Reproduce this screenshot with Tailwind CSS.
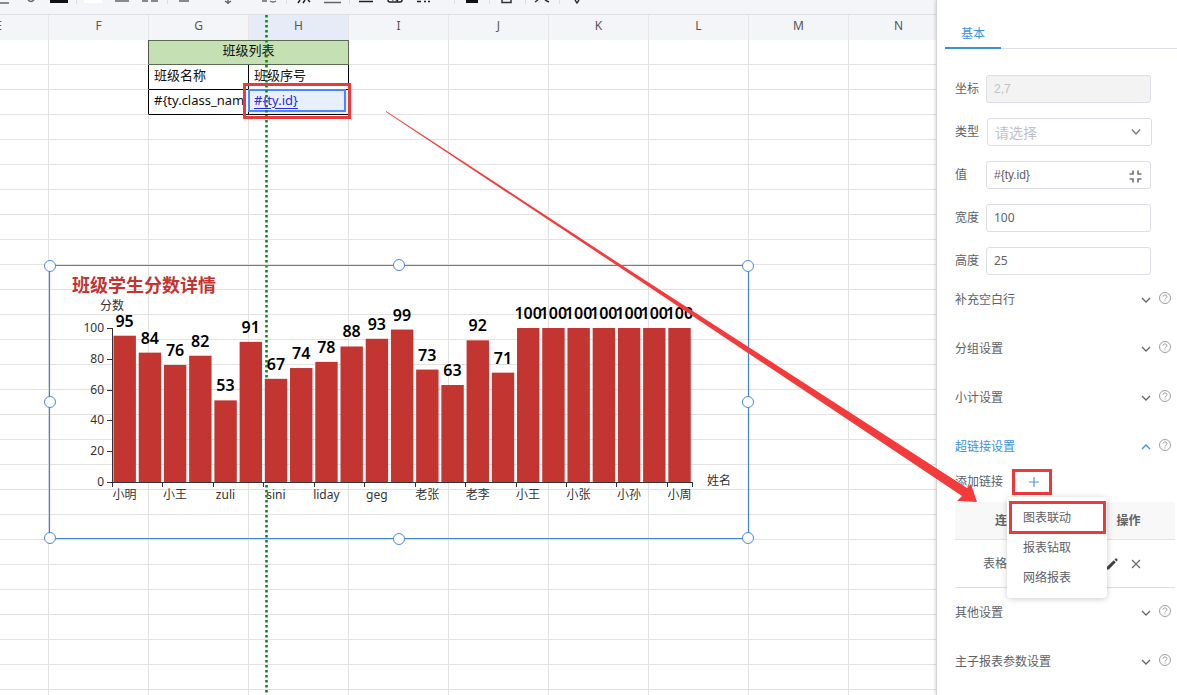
<!DOCTYPE html>
<html lang="zh-CN">
<head>
<meta charset="utf-8">
<title>报表设计器</title>
<script src="https://cdn.jsdelivr.net/npm/@tailwindcss/browser@4"></script>
</head>
<body class="flex h-screen overflow-hidden bg-white font-['Noto_Sans','Noto_Sans_CJK_SC',sans-serif] text-[12px] text-[#606266]">
<main class="relative min-w-0 flex-1 overflow-hidden">
  <div class="h-[15px] border-b border-[#dfe0e2] bg-[#f4f5f8]">
    <svg class="block h-[14px] w-[600px]" viewBox="0 0 600 14" fill="none" stroke="#666" stroke-width="1.5" role="img" aria-label="工具栏">
      <path d="M0 3H9M28 0q3 3 6 0M115 1h14M142 1h6m3 0h7M179 1h10M228 0v4M225 1l3 2 3-2M262 1h5m3 0q3 2 6 0M324 2.500h17"/>
      <path d="M50 1.500h18" stroke="#111" stroke-width="3"/>
      <path d="M84 1.500h18" stroke="#fff" stroke-width="3"/>
      <path d="M298 3l2-3m3 3l2-3m3 0l2 2M359 1.500h14M388 0q0 2 2 2h10q2 0 2-2M392 0l3-1 3 2M417 1.500h4m3 0h2m2 0h2" stroke="#222"/>
      <path d="M466 1.500h12" stroke="#111" stroke-width="3"/>
      <path d="M502 0v2.500h9V0M535 2l3-2m7 0l4 2M575 0l2 3 2-3" stroke="#333"/>
      <path d="M76.500 0v4M167.500 0v4M286.500 0v4M349.500 0v4M454.500 0v4M489.500 0v4M525.500 0v4M559.500 0v4" stroke="#dedee0" stroke-width="1"/>
    </svg>
  </div>
  <table class="-ml-[51px] w-[1000px] table-fixed border-separate border-spacing-0 leading-[19px] text-[#111]">
    <thead>
      <tr class="h-[25px] bg-[#f4f5f8] text-[12px] text-[#585757] *:border-r *:border-[#e6e6e6] *:p-0 *:pb-1 *:font-normal">
        <th>E</th><th>F</th><th>G</th><th class="bg-[#e6ebf8]">H</th><th>I</th><th>J</th><th>K</th><th>L</th><th>M</th><th>N</th>
      </tr>
    </thead>
    <tbody id="rows">
      <tr class="h-[25px] *:border-r *:border-b *:border-[#e2e2e2] *:p-0 *:pb-1">
        <td></td><td class="border-r-[#555]!"></td><td colspan="2" class="border-t border-[#5b6b52]! bg-[#c5e0b3] text-center text-[13px]">班级列表</td><td></td><td></td><td></td><td></td><td></td><td></td>
      </tr>
      <tr class="h-[25px] *:border-r *:border-b *:border-[#e2e2e2] *:p-0 *:pb-1">
        <td></td><td class="border-r-black!"></td><td class="border-black! pl-[5px]! text-[13px]">班级名称</td><td class="border-black! pl-[5px]! text-[13px]">班级序号</td><td></td><td></td><td></td><td></td><td></td><td></td>
      </tr>
      <tr class="h-[25px] *:border-r *:border-b *:border-[#e2e2e2] *:p-0 *:pb-1">
        <td></td><td class="border-r-black!"></td><td class="overflow-hidden border-black! pl-[5px]! text-[13px] whitespace-nowrap">#{ty.class_nam</td><td class="border-black! bg-[#e9effd] pl-[5px]! text-[13px] text-[#2b2be0] underline underline-offset-3">#{ty.id}</td><td></td><td></td><td></td><td></td><td></td><td></td>
      </tr>
    </tbody>
  </table>

  <div class="absolute top-[89px] left-[248px] h-[23px] w-[98px] border-2 border-[#4b89ff]"></div>
  <svg class="absolute top-[15px] left-[265px] h-[680px] w-[3px]" viewBox="0 0 3 680"><path d="M1.500 0V680" stroke="#0c8a1c" stroke-width="2.600" stroke-dasharray="2.500 2.500"/></svg>
  <div class="absolute top-[83px] left-[243px] h-[36px] w-[108px] border-3 border-[#ea3a3c]"></div>

  <svg id="chart" class="absolute top-[255px] left-[40px] h-[295px] w-[720px]" viewBox="40 255 720 295" fill="#333" font-size="12">
    <text x="72" y="292" font-size="18" font-weight="700" fill="#c23531">班级学生分数详情</text>
    <text x="112" y="310" text-anchor="middle">分数</text>
    <text x="719" y="485" text-anchor="middle">姓名</text>
    <g id="bars"></g>
    <path d="M112.500 328V482M112 482.500H692" stroke="#333" fill="none"/>
    <g fill="none" stroke="#3f83dc"><path d="M49.500 265.500H748.500V538.500H49.500Z" stroke-width="1.200"/>
      <g fill="#fff" stroke="#4b89dc"><circle cx="50" cy="266" r="5.500"/><circle cx="399" cy="265" r="5.500"/><circle cx="748" cy="266" r="5.500"/><circle cx="50" cy="402" r="5.500"/><circle cx="748" cy="402" r="5.500"/><circle cx="50" cy="538" r="5.500"/><circle cx="399" cy="539" r="5.500"/><circle cx="748" cy="538" r="5.500"/></g></g>
  </svg>
</main>

<aside class="relative z-10 w-[241px] shrink-0 border-l border-[#d4d5d8] bg-white shadow-[-1px_0_3px_#0002]">
  <div class="ml-2 flex h-[49px] items-end border-b border-[#dcdfe6]">
    <button class="-mb-px h-[28px] w-[56px] border-b-2 border-[#3d8ed8] text-[#3d92e6]">基本</button>
  </div>
  <form class="flex flex-col gap-[15px] pt-[26px] pl-[18px]">
    <div class="flex h-7 items-center"><label for="pos" class="w-[31px]">坐标</label><input id="pos" disabled value="2,7" class="h-7 w-[165px] rounded-[3px] border border-[#dcdfe6] bg-[#f3f3f4] px-[7px] font-['Liberation_Sans',sans-serif] text-[#bfc2c8]"></div>
    <div class="flex h-7 items-center"><label for="type" class="w-[31px]">类型</label>
      <div class="relative ml-px"><select id="type" class="h-7 w-[165px] appearance-none rounded-[3px] border border-[#dcdfe6] bg-white px-[7px] text-[14px] text-[#bfc2c8]"><option>请选择</option></select>
      <svg class="pointer-events-none absolute top-[9px] right-[11px] size-2.5" viewBox="0 0 10 10" fill="none" stroke="#777" stroke-width="1.300"><path d="M1 2.500L5 7 9 2.500"/></svg></div></div>
    <div class="flex h-7 items-center"><label for="val" class="w-[31px]">值</label>
      <div class="relative"><input id="val" value="#{ty.id}" class="h-7 w-[165px] rounded-[3px] border border-[#dcdfe6] px-[7px] font-['Liberation_Sans',sans-serif]">
      <svg class="absolute top-[9px] right-[9px] size-[13px]" viewBox="0 0 13 13" fill="none" stroke="#777" stroke-width="1.700"><path d="M.5 4H4V.500M9 .500V4H12.500M.5 9H4V12.500M9 12.500V9H12.500"/></svg></div></div>
    <div class="flex h-7 items-center"><label for="w" class="w-[31px]">宽度</label><input id="w" value="100" class="h-7 w-[165px] rounded-[3px] border border-[#dcdfe6] px-[7px] pb-[2px]"></div>
    <div class="flex h-7 items-center"><label for="h" class="w-[31px]">高度</label><input id="h" value="25" class="h-7 w-[165px] rounded-[3px] border border-[#dcdfe6] px-[7px] pb-[2px]"></div>
  </form>
  <section class="pl-[18px]">
    <div class="flex h-[49px] items-center pr-[6px]"><button class="flex flex-1 items-center justify-between">补充空白行<svg class="size-2.5" viewBox="0 0 10 10" fill="none" stroke="#666" stroke-width="1.300"><path d="M1 3L5 7 9 3"/></svg></button><svg class="mb-1 ml-2 size-3" viewBox="0 0 12 12" fill="none" stroke="#909399" stroke-width=".9"><circle cx="6" cy="6" r="5.500"/><path d="M4.100 4.700a1.900 1.800 0 1 1 2.700 1.600Q6 6.700 6 7.500M6 8.500V9.400"/></svg></div>
    <div class="flex h-[49px] items-center pr-[6px]"><button class="flex flex-1 items-center justify-between">分组设置<svg class="size-2.5" viewBox="0 0 10 10" fill="none" stroke="#666" stroke-width="1.300"><path d="M1 3L5 7 9 3"/></svg></button><svg class="mb-1 ml-2 size-3" viewBox="0 0 12 12" fill="none" stroke="#909399" stroke-width=".9"><circle cx="6" cy="6" r="5.500"/><path d="M4.100 4.700a1.900 1.800 0 1 1 2.700 1.600Q6 6.700 6 7.500M6 8.500V9.400"/></svg></div>
    <div class="flex h-[49px] items-center pr-[6px]"><button class="flex flex-1 items-center justify-between">小计设置<svg class="size-2.5" viewBox="0 0 10 10" fill="none" stroke="#666" stroke-width="1.300"><path d="M1 3L5 7 9 3"/></svg></button><svg class="mb-1 ml-2 size-3" viewBox="0 0 12 12" fill="none" stroke="#909399" stroke-width=".9"><circle cx="6" cy="6" r="5.500"/><path d="M4.100 4.700a1.900 1.800 0 1 1 2.700 1.600Q6 6.700 6 7.500M6 8.500V9.400"/></svg></div>
    <div class="flex h-[49px] items-center pr-[6px]"><button class="flex flex-1 items-center justify-between text-[#3d92e6]">超链接设置<svg class="size-2.5" viewBox="0 0 10 10" fill="none" stroke="currentColor" stroke-width="1.300"><path d="M1 7L5 3 9 7"/></svg></button><svg class="mb-1 ml-2 size-3" viewBox="0 0 12 12" fill="none" stroke="#909399" stroke-width=".9"><circle cx="6" cy="6" r="5.500"/><path d="M4.100 4.700a1.900 1.800 0 1 1 2.700 1.600Q6 6.700 6 7.500M6 8.500V9.400"/></svg></div>
  </section>
  <div class="relative pl-[18px]">
    <div class="-mt-[2px] flex h-[26px] items-center gap-[9px]">添加链接<button aria-label="添加" class="flex h-[26px] w-10 items-center justify-center border-3 border-[#ea3a3c]"><svg class="ml-1 size-2.5" viewBox="0 0 10 10" stroke="#4a98e0" stroke-width="1.200"><path d="M5 0V10M0 5H10"/></svg></button></div>
    <table class="mt-[7px] w-[220px] table-fixed border-separate border-spacing-0">
      <thead><tr class="h-[38px] bg-[#f8f8f9] *:border-b *:border-[#e3e4e8] *:p-0"><th class="w-[127px] pl-[40px]! text-left">连接</th><th class="text-center">操作</th></tr></thead>
      <tbody><tr class="h-[48px] *:border-b *:border-[#dcdfe6] *:p-0"><td class="pl-[28px]!">表格联动</td><td><div class="flex items-center gap-[12px] pl-[24px]">
        <button aria-label="编辑"><svg class="block size-3" viewBox="0 0 12 12" fill="#444"><path d="M0 12L.8 9 7.700 2.200 9.800 4.300 3 11.200ZM8.500 1.400L9.500.4Q10 0 10.600.500L11.500 1.400Q12 2 11.500 2.500L10.500 3.500Z"/></svg></button>
        <button aria-label="删除"><svg class="block size-3" viewBox="0 0 12 12" stroke="#666" stroke-width="1.100"><path d="M2 2L10 10M10 2L2 10"/></svg></button></div></td></tr></tbody>
    </table>
    <div role="menu" class="absolute top-[28px] left-[70px] flex h-[101px] w-[100px] flex-col rounded bg-white pt-[6px] shadow-[0_1px_6px_#0003] *:h-[30px] *:pl-4 *:text-left">
      <button role="menuitem">图表联动</button><button role="menuitem">报表钻取</button><button role="menuitem">网络报表</button>
    </div>
    <div class="pointer-events-none absolute top-[32px] left-[72px] h-[33px] w-[97px] border-3 border-[#ea3a3c]"></div>
  </div>
  <section class="pl-[18px]">
    <div class="flex h-[49px] items-center pr-[6px]"><button class="flex flex-1 items-center justify-between">其他设置<svg class="size-2.5" viewBox="0 0 10 10" fill="none" stroke="#666" stroke-width="1.300"><path d="M1 3L5 7 9 3"/></svg></button><svg class="mb-1 ml-2 size-3" viewBox="0 0 12 12" fill="none" stroke="#909399" stroke-width=".9"><circle cx="6" cy="6" r="5.500"/><path d="M4.100 4.700a1.900 1.800 0 1 1 2.700 1.600Q6 6.700 6 7.500M6 8.500V9.400"/></svg></div>
    <div class="flex h-[49px] items-center pr-[6px]"><button class="flex flex-1 items-center justify-between">主子报表参数设置<svg class="size-2.5" viewBox="0 0 10 10" fill="none" stroke="#666" stroke-width="1.300"><path d="M1 3L5 7 9 3"/></svg></button><svg class="mb-1 ml-2 size-3" viewBox="0 0 12 12" fill="none" stroke="#909399" stroke-width=".9"><circle cx="6" cy="6" r="5.500"/><path d="M4.100 4.700a1.900 1.800 0 1 1 2.700 1.600Q6 6.700 6 7.500M6 8.500V9.400"/></svg></div>
  </section>
</aside>
<svg class="pointer-events-none absolute top-0 left-0 z-20 h-[695px] w-[1177px]" viewBox="0 0 1177 695" fill="#f33b3b"><path d="M386 111L620 264 967 488 971 484 977 502 957 501 962 496 620 267.500 386 112Z"/></svg>
<script>
const rows = document.getElementById('rows');
for (let i = 0; i < 24; i++) {
  const tr = document.createElement('tr');
  tr.className = 'h-[25px] *:border-r *:border-b *:border-[#e2e2e2] *:p-0';
  tr.innerHTML = '<td></td>'.repeat(10);
  rows.append(tr);
}
const scores = [95,84,76,82,53,91,67,74,78,88,93,99,73,63,92,71,100,100,100,100,100,100,100];
const names = ['小明','小王','zuli','sini','liday','geg','老张','老李','小王','小张','小孙','小周'];
const left = 112, base = 482, step = 25.22;
let s = '', labels = '';
scores.forEach((v, i) => {
  const x = left + i * step, h = v * 1.54;
  s += `<rect x="${x + 1.5}" y="${base - h}" width="22.4" height="${h}" fill="#c23531"/>`;
  labels += `<text x="${x + step / 2}" y="${base - h - 9}" text-anchor="middle" font-size="16" font-weight="600" fill="#000">${v}</text>`;
});
names.forEach((n, i) => {
  const x = Math.round(left + i * 2 * step) + .5;
  s += `<path d="M${x} 482v5" stroke="#333"/>`;
  labels += `<text x="${left + (i * 2 + .5) * step}" y="499" text-anchor="middle">${n}</text>`;
});
s += '<path d="M692.5 482v5" stroke="#333"/>';
for (let v = 0; v <= 100; v += 20) {
  const y = Math.round(base - v * 1.54) + .5;
  s += `<path d="M107 ${y}h5" stroke="#333"/>`;
  labels += `<text x="104" y="${y + 3}" text-anchor="end">${v}</text>`;
}
document.getElementById('bars').innerHTML = s + labels;
</script>
</body>
</html>
